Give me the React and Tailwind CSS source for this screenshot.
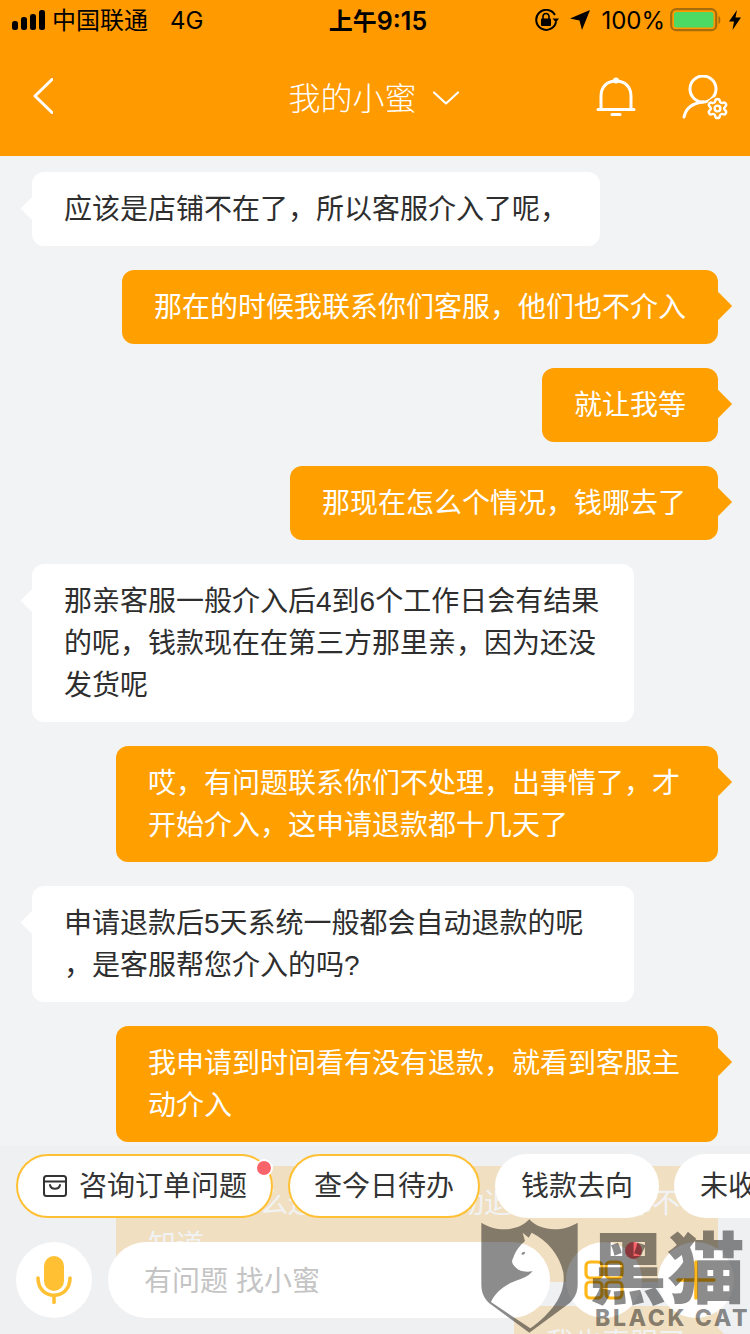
import React from "react";
import { Settings } from "lucide-react";

const FONT = "font-['Inter','Noto_Sans_CJK_SC',sans-serif]";

function Signal() {
  return (
    <svg width="33" height="20" viewBox="0 0 33 20" fill="#000">
      <rect x="0" y="11" width="6" height="9" rx="2.5" />
      <rect x="9" y="7" width="6" height="13" rx="2.5" />
      <rect x="18" y="4" width="6" height="16" rx="2.5" />
      <rect x="27" y="0" width="6" height="20" rx="2.5" />
    </svg>
  );
}

function StatusRight() {
  return (
    <div className="flex items-center justify-end pr-[9px]">
      <svg width="24" height="22" viewBox="0 0 24 22" fill="none" className="mr-[11px]">
        <path d="M20 6 A10 10 0 1 0 21 13" stroke="#000" strokeWidth="2" />
        <path d="M17.5 9.5 L24 9.5 L21 13.5 Z" fill="#000" />
        <rect x="6" y="9.5" width="10" height="7.5" rx="1" fill="#000" />
        <path d="M8 10 V7.5 a3 3 0 0 1 6 0 V10" stroke="#000" strokeWidth="1.6" />
      </svg>
      <svg width="20" height="20" viewBox="0 0 20 20" className="mr-[11px]">
        <path d="M20 0 L12 20 L9.5 10.5 L0 8.5 Z" fill="#000" />
      </svg>
      <span className="text-[24px] leading-none text-black mr-[5px] pt-[2px]">100%</span>
      <svg width="52" height="24" viewBox="0 0 52 24" className="mr-[7px]">
        <rect x="1.2" y="1.2" width="45" height="21" rx="5" fill="none" stroke="#a66c0c" strokeWidth="2.2" />
        <rect x="4" y="4" width="39.5" height="15.5" rx="2.5" fill="#4cd964" />
        <path d="M48.5 8 C51 9 51 15 48.5 16 Z" fill="#a66c0c" />
      </svg>
      <svg width="12" height="20" viewBox="0 0 12 20">
        <path d="M8 0 L0 11.5 H5 L3.5 20 L12 7.5 H6.5 Z" fill="#000" />
      </svg>
    </div>
  );
}

function Bubble({ side, children, wide }) {
  const left = side === "left";
  return (
    <div className={`flex ${left ? "justify-start pl-8" : "justify-end pr-8"}`}>
      <div
        className={`relative rounded-xl pt-[17px] pb-[15px] text-[28px] leading-[42px] font-['Liberation_Sans','Noto_Sans_CJK_SC',sans-serif] ${
          wide ? "w-[602px]" : "w-fit"
        } ${left ? "bg-white text-[#2e2e2e] px-8" : "bg-[#ffa000] text-white px-8"}`}
      >
        {left ? (
          <span className="absolute -left-[8px] top-[28px] w-[17px] h-[17px] rotate-45 bg-white" />
        ) : (
          <span className="absolute -right-[10px] top-[26px] w-[20px] h-[20px] rotate-45 bg-[#ffa000]" />
        )}
        <span className="block whitespace-pre">{children}</span>
      </div>
    </div>
  );
}

function Chip({ children, bordered, icon, dot }) {
  return (
    <div
      className={`relative shrink-0 h-[64px] rounded-full bg-white flex items-center text-[28px] text-[#333] ${
        bordered ? "border-2 border-[#ffc033]" : ""
      } ${icon ? "pl-[25px] pr-[24px] gap-3" : bordered ? "px-[24px]" : "px-[26px]"}`}
    >
      {icon}
      <span>{children}</span>
      {dot && (
        <span className="absolute -right-[2px] top-[3px] w-[18px] h-[18px] rounded-full bg-[#f9646a] border-2 border-white" />
      )}
    </div>
  );
}

function CircleBtn({ children }) {
  return (
    <div className="relative shrink-0 w-[76px] h-[76px] rounded-full bg-white flex items-center justify-center">
      {children}
    </div>
  );
}

export default function App() {
  return (
    <div className={`relative w-[750px] h-[1334px] overflow-hidden bg-[#f2f3f5] ${FONT}`}>
      {/* header */}
      <header className="h-[156px] bg-[#ff9a00] flex flex-col">
        <div className="h-[40px] grid grid-cols-[1fr_auto_1fr] items-center text-black">
          <div className="flex items-center pl-3">
            <Signal />
            <span className="ml-[7px] text-[24px] leading-none pt-[2px]">中国联通</span>
            <span className="ml-[22px] text-[24px] leading-none pt-[2px]">4G</span>
          </div>
          <div className="text-[24px] leading-none font-semibold pt-[2px] ml-[6px]">
            上午<span className="text-[25px]">9:15</span>
          </div>
          <StatusRight />
        </div>
        <div className="flex-1 grid grid-cols-[1fr_auto_1fr] items-center">
          <div className="pl-[33px] pb-[4px]">
            <svg width="20" height="36" viewBox="0 0 20 36" fill="none">
              <path d="M19 1.5 L2 18 L19 34.5" stroke="#fff" strokeWidth="3" strokeLinecap="round" strokeLinejoin="round" />
            </svg>
          </div>
          <div className="flex items-center text-white text-[32px] -ml-[3px]">
            <span className="font-light pt-[2px]">我的小蜜</span>
            <svg width="26" height="14" viewBox="0 0 26 14" fill="none" className="ml-[16px]">
              <path d="M1 1.5 L13 12.5 L25 1.5" stroke="#fff" strokeWidth="2.2" strokeLinecap="round" strokeLinejoin="round" />
            </svg>
          </div>
          <div className="flex items-center justify-end pr-[22px]">
            <svg width="40" height="40" viewBox="0 0 40 40" fill="none" className="mb-[3px]">
              <path d="M5 32 V19 C5 10 11 4 20 4 C29 4 35 10 35 19 V32" stroke="#fff" strokeWidth="3" />
              <circle cx="20" cy="3.5" r="3" fill="#fff" />
              <path d="M2 32.5 H38" stroke="#fff" strokeWidth="3" strokeLinecap="round" />
              <path d="M16 37.5 H24" stroke="#fff" strokeWidth="3" strokeLinecap="round" />
            </svg>
            <div className="relative w-[46px] h-[44px] ml-[46px] mb-[2px]">
              <svg width="46" height="44" viewBox="0 0 46 44" fill="none">
                <circle cx="21" cy="14" r="13" stroke="#fff" strokeWidth="3" />
                <path d="M2 42 C4 33 11 28 21 27" stroke="#fff" strokeWidth="3" strokeLinecap="round" />
              </svg>
              <Settings size={23} strokeWidth={2.6} color="#fff" className="absolute -right-[1px] bottom-[-1px] bg-[#ff9a00] rounded-full" />
            </div>
          </div>
        </div>
      </header>

      {/* messages */}
      <main className="flex flex-col gap-6 pt-4">
        <Bubble side="left">应该是店铺不在了，所以客服介入了呢，</Bubble>
        <Bubble side="right">那在的时候我联系你们客服，他们也不介入</Bubble>
        <Bubble side="right">就让我等</Bubble>
        <Bubble side="right">那现在怎么个情况，钱哪去了</Bubble>
        <Bubble side="left" wide>
          {"那亲客服一般介入后4到6个工作日会有结果\n的呢，钱款现在在第三方那里亲，因为还没\n发货呢"}
        </Bubble>
        <Bubble side="right" wide>
          {"哎，有问题联系你们不处理，出事情了，才\n开始介入，这申请退款都十几天了"}
        </Bubble>
        <Bubble side="left" wide>
          {"申请退款后5天系统一般都会自动退款的呢\n，是客服帮您介入的吗?"}
        </Bubble>
        <Bubble side="right" wide>
          {"我申请到时间看有没有退款，就看到客服主\n动介入"}
        </Bubble>
        <Bubble side="right" wide>
          {"你们为什么还要等客服主动退款，我也都不\n知道"}
        </Bubble>
        <Bubble side="right">我也真服了</Bubble>
      </main>

      {/* bottom bar over the list */}
      <div className="absolute left-0 right-0 bottom-0 h-[188px] bg-[rgba(238,239,241,0.8)] pt-2">
        <div className="flex gap-[15px] pl-4 h-[64px]">
          <Chip
            bordered
            dot
            icon={
              <svg width="24" height="24" viewBox="0 0 24 24" fill="none" className="shrink-0">
                <rect x="1" y="2" width="22" height="20" rx="2.5" stroke="#333" strokeWidth="2" />
                <path d="M1 7.5 H23" stroke="#333" strokeWidth="2" />
                <path d="M7 11 C8 16 16 16 17 11" stroke="#333" strokeWidth="2" strokeLinecap="round" />
              </svg>
            }
          >
            咨询订单问题
          </Chip>
          <Chip bordered>查今日待办</Chip>
          <Chip>钱款去向</Chip>
          <Chip>未收到退款</Chip>
        </div>
        <div className="flex gap-4 px-4 mt-6">
          <CircleBtn>
            <svg width="36" height="50" viewBox="0 0 36 50" fill="none">
              <rect x="8" y="1" width="20" height="35" rx="10" fill="#ffc033" />
              <path d="M2 23 C2 46 34 46 34 23" stroke="#ffc033" strokeWidth="3.6" strokeLinecap="round" />
              <path d="M18 41 V47.5" stroke="#ffc033" strokeWidth="3.6" strokeLinecap="round" />
            </svg>
          </CircleBtn>
          <div className="flex-1 h-[76px] rounded-full bg-white flex items-center pl-[36px] pt-[1px] text-[28px] text-[#c4c4c4]">
            有问题 找小蜜
          </div>
          <CircleBtn>
            <svg width="40" height="40" viewBox="0 0 40 40" fill="none">
              <rect x="2" y="2" width="16" height="16" rx="4" stroke="#ffb81c" strokeWidth="3.2" />
              <rect x="22" y="2" width="16" height="16" rx="4" stroke="#ffb81c" strokeWidth="3.2" />
              <rect x="2" y="22" width="16" height="16" rx="4" stroke="#ffb81c" strokeWidth="3.2" />
              <rect x="22" y="22" width="16" height="16" rx="4" stroke="#ffb81c" strokeWidth="3.2" />
            </svg>
            <span className="absolute left-[59px] top-0 w-[17px] h-[17px] rounded-full bg-[#f9646a]" />
          </CircleBtn>
          <CircleBtn>
            <svg width="40" height="40" viewBox="0 0 40 40" fill="none">
              <path d="M20 2 V38 M2 20 H38" stroke="#ffb81c" strokeWidth="3.6" strokeLinecap="round" />
            </svg>
          </CircleBtn>
        </div>
      </div>

      {/* watermark */}
      <div className="absolute left-[476px] top-[1216px] flex pointer-events-none">
        <svg width="110" height="118" viewBox="0 0 330 354">
          <path
            fillRule="evenodd"
            fill="rgba(0,0,0,0.45)"
            d="M16 20 C60 48 125 48 160 10 C195 48 260 48 305 20 L305 205 C305 232 295 248 280 262 L160 350 L40 262 C25 248 16 232 16 205 Z
               M140 50 L158 65 L167 50 C215 75 250 115 262 170 C270 230 235 285 163 337 L45 258 C55 235 75 215 105 200 C130 190 155 185 170 165 C150 170 130 165 120 155 C108 145 105 135 112 125 C118 105 135 85 147 75 Z"
          />
          <ellipse cx="142" cy="112" rx="6" ry="3.5" fill="rgba(0,0,0,0.45)" transform="rotate(-30 142 112)" />
        </svg>
      </div>
      <div className="absolute left-[589px] top-[1222px] w-[161px] text-[rgba(0,0,0,0.45)] pointer-events-none">
        <div className="text-[78px] leading-[84px] font-black whitespace-nowrap font-['Noto_Sans_CJK_SC',sans-serif]">黑猫</div>
        <div className="pl-[6px] text-[23px] leading-[24px] font-extrabold whitespace-nowrap tracking-[2.6px] font-['Inter',sans-serif]">BLACK CAT</div>
      </div>
    </div>
  );
}
